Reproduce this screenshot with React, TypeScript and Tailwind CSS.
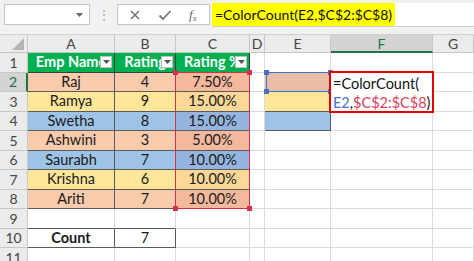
const COLS = ["A", "B", "C", "D", "E", "F", "G"];

const PEACH = "#f8cbad";
const YELLOW = "#ffe699";
const BLUE = "#9dc3e6";

const PEACH_C = "#f4b89d";
const YELLOW_C = "#fcd898";
const BLUE_C = "#95b5e0";

type Emp = { name: string; rating: number; pct: string; bg: string; bgC: string };

const EMPLOYEES: Emp[] = [
  { name: "Raj", rating: 4, pct: "7.50%", bg: PEACH, bgC: PEACH_C },
  { name: "Ramya", rating: 9, pct: "15.00%", bg: YELLOW, bgC: YELLOW_C },
  { name: "Swetha", rating: 8, pct: "15.00%", bg: BLUE, bgC: BLUE_C },
  { name: "Ashwini", rating: 3, pct: "5.00%", bg: PEACH, bgC: PEACH_C },
  { name: "Saurabh", rating: 7, pct: "10.00%", bg: BLUE, bgC: BLUE_C },
  { name: "Krishna", rating: 6, pct: "10.00%", bg: YELLOW, bgC: YELLOW_C },
  { name: "Ariti", rating: 7, pct: "10.00%", bg: PEACH, bgC: PEACH_C },
];

const E_FILLS: Record<number, string> = { 2: "#e9bca8", 3: YELLOW, 4: BLUE };

function FilterButton() {
  return (
    <span className="absolute right-[2px] top-1/2 flex h-[12px] w-[12px] -translate-y-1/2 items-center justify-center border border-[#bfbfbf] bg-white">
      <svg width="7" height="4" viewBox="0 0 7 4">
        <polygon points="0,0 7,0 3.5,4" fill="#555" />
      </svg>
    </span>
  );
}

function TopBar() {
  return (
    <div className="flex h-[35px] items-start border-b border-[#d0d0d0] bg-[#f1f1f1] pl-[4px] pt-[3px]">
      <div className="mt-[1px] flex h-[21px] w-[86px] items-center justify-end border border-[#c6c6c6] bg-white pr-[6px]">
        <svg width="7" height="4" viewBox="0 0 7 4">
          <polygon points="0,0 7,0 3.5,4" fill="#666" />
        </svg>
      </div>
      <div className="flex h-[23px] w-[27px] items-center justify-center text-[12px] leading-none text-[#a0a0a0]">⋮</div>
      <div className="mt-[1px] flex h-[21px] w-[93px] items-center gap-[17px] border border-[#c6c6c6] bg-white pl-[11px]">
        <svg width="12" height="12" viewBox="0 0 12 12">
          <path d="M2 2 L10 10 M10 2 L2 10" stroke="#777" strokeWidth="1.6" fill="none" />
        </svg>
        <svg width="14" height="12" viewBox="0 0 14 12">
          <path d="M1.5 6.5 L5 10 L12.5 2" stroke="#777" strokeWidth="1.8" fill="none" />
        </svg>
        <span className="font-['Liberation_Serif',serif] text-[13px] italic leading-none text-[#666]">
          f<sub className="text-[9px]">x</sub>
        </span>
      </div>
      <div className="ml-[2px] flex h-[24px] flex-1 items-stretch border-b border-[#d0d0d0] bg-white">
        <span className="flex items-center bg-[#ffff00] px-[3px] text-[14px] text-[#111]">=ColorCount(E2,$C$2:$C$8)</span>
      </div>
    </div>
  );
}

function HeaderRow() {
  return (
    <>
      <div className="flex h-[18px] items-end justify-end border-b border-r border-[#c6c6c6] bg-[#ebebeb] pb-[2px] pr-[3px]">
        <svg width="12" height="12" viewBox="0 0 12 12">
          <polygon points="12,0 12,12 0,12" fill="#b4b4b4" />
        </svg>
      </div>
      {COLS.map((c) =>
        c === "F" ? (
          <div
            key={c}
            className="flex h-[18px] items-center justify-center border-b-2 border-r border-b-[#217346] border-r-[#c6c6c6] bg-[#d4d4d4] text-[14px] text-[#217346]"
          >
            {c}
          </div>
        ) : (
          <div
            key={c}
            className="flex h-[18px] items-center justify-center border-b border-r border-[#c6c6c6] bg-[#ebebeb] text-[14px] text-[#444]"
          >
            {c}
          </div>
        ),
      )}
    </>
  );
}

function RowHead({ n }: { n: number }) {
  if (n === 2) {
    return (
      <div className="flex h-[19.5px] items-center justify-center border-b border-r-2 border-b-[#c6c6c6] border-r-[#217346] bg-[#d4d4d4] text-[14px] text-[#217346]">
        {n}
      </div>
    );
  }
  return (
    <div className="flex h-[19.5px] items-center justify-center border-b border-r border-[#c6c6c6] bg-[#ebebeb] text-[14px] text-[#444]">
      {n}
    </div>
  );
}

function Blank({ dark }: { dark?: boolean }) {
  return (
    <div
      className={
        dark
          ? "h-[19.5px] border-b border-r border-b-[#555] border-r-[#d9d9d9] bg-white"
          : "h-[19.5px] border-b border-r border-[#dadada] bg-white"
      }
    />
  );
}

function DataCell({ text, bg, bold }: { text: string | number; bg: string; bold?: boolean }) {
  return (
    <div
      className={
        "flex h-[19.5px] items-center justify-center border-b border-r border-[#5a5a5a] text-[14.5px] text-[#1a1a1a]" +
        (bold ? " font-bold" : "")
      }
      style={{ backgroundColor: bg }}
    >
      {text}
    </div>
  );
}

function HeaderCell({ text }: { text: string }) {
  return (
    <div className="relative flex h-[19.5px] items-center justify-center overflow-hidden border-b border-r border-[#3d3d3d] bg-[#00b050] text-[14.5px] font-bold text-white">
      <span className="whitespace-nowrap">{text}</span>
      <FilterButton />
    </div>
  );
}

function ECell({ row }: { row: number }) {
  const fill = E_FILLS[row];
  if (!fill) return <Blank dark={row === 1} />;
  return <div className="h-[19.5px] border-b border-r border-[#5a5a5a]" style={{ backgroundColor: fill }} />;
}

function Handles({ color }: { color: string }) {
  const spots = ["-left-[3px] -top-[3px]", "-right-[3px] -top-[3px]", "-bottom-[3px] -left-[3px]", "-bottom-[3px] -right-[3px]"];
  return (
    <>
      {spots.map((s) => (
        <span key={s} className={"absolute h-[5px] w-[5px] " + s} style={{ backgroundColor: color }} />
      ))}
    </>
  );
}

export default function App() {
  const rows = Array.from({ length: 11 }, (_, i) => i + 1);

  return (
    <div className="relative h-[261px] w-[474px] overflow-hidden bg-white font-['Lato',sans-serif]">
      <TopBar />
      <div className="relative">
        <div className="grid grid-cols-[28px_87px_61px_74px_15px_66px_102px_1fr]">
          <HeaderRow />
          {rows.map((r) => {
            const emp = r >= 2 && r <= 8 ? EMPLOYEES[r - 2] : null;
            return (
              <div key={r} className="contents">
                <RowHead n={r} />
                {r === 1 ? (
                  <>
                    <HeaderCell text="Emp Name" />
                    <HeaderCell text="Rating" />
                    <HeaderCell text="Rating %" />
                  </>
                ) : emp ? (
                  <>
                    <DataCell text={emp.name} bg={emp.bg} />
                    <DataCell text={emp.rating} bg={emp.bg} />
                    <DataCell text={emp.pct} bg={emp.bgC} />
                  </>
                ) : r === 10 ? (
                  <>
                    <DataCell text="Count" bg="#ffffff" bold />
                    <DataCell text={7} bg="#ffffff" />
                    <Blank />
                  </>
                ) : (
                  <>
                    <Blank dark={r === 9} />
                    <Blank dark={r === 9} />
                    <Blank />
                  </>
                )}
                <Blank />
                <ECell row={r} />
                <Blank />
                <Blank />
              </div>
            );
          })}
        </div>

        {/* C2:C8 reference highlight */}
        <div className="pointer-events-none absolute left-[175px] top-[37px] h-[137px] w-[75px] border border-[#d42f4c]">
          <Handles color="#d42f4c" />
        </div>

        {/* E2 reference highlight */}
        <div className="pointer-events-none absolute left-[266px] top-[37px] h-[20px] w-[65px] border border-[#4472c4]">
          <Handles color="#4472c4" />
        </div>

        {/* F2 in-cell editor */}
        <div className="absolute left-[329px] top-[36px] h-[42px] w-[105px] whitespace-nowrap border-2 border-[#e00000] bg-white pl-[2px] pt-[1px] text-[14.5px] leading-[19px] text-[#111]">
          <div>=ColorCount(</div>
          <div>
            <span className="text-[#4472c4]">E2</span>,<span className="text-[#d8405c]">$C$2:$C$8</span>)
          </div>
        </div>
      </div>
    </div>
  );
}
